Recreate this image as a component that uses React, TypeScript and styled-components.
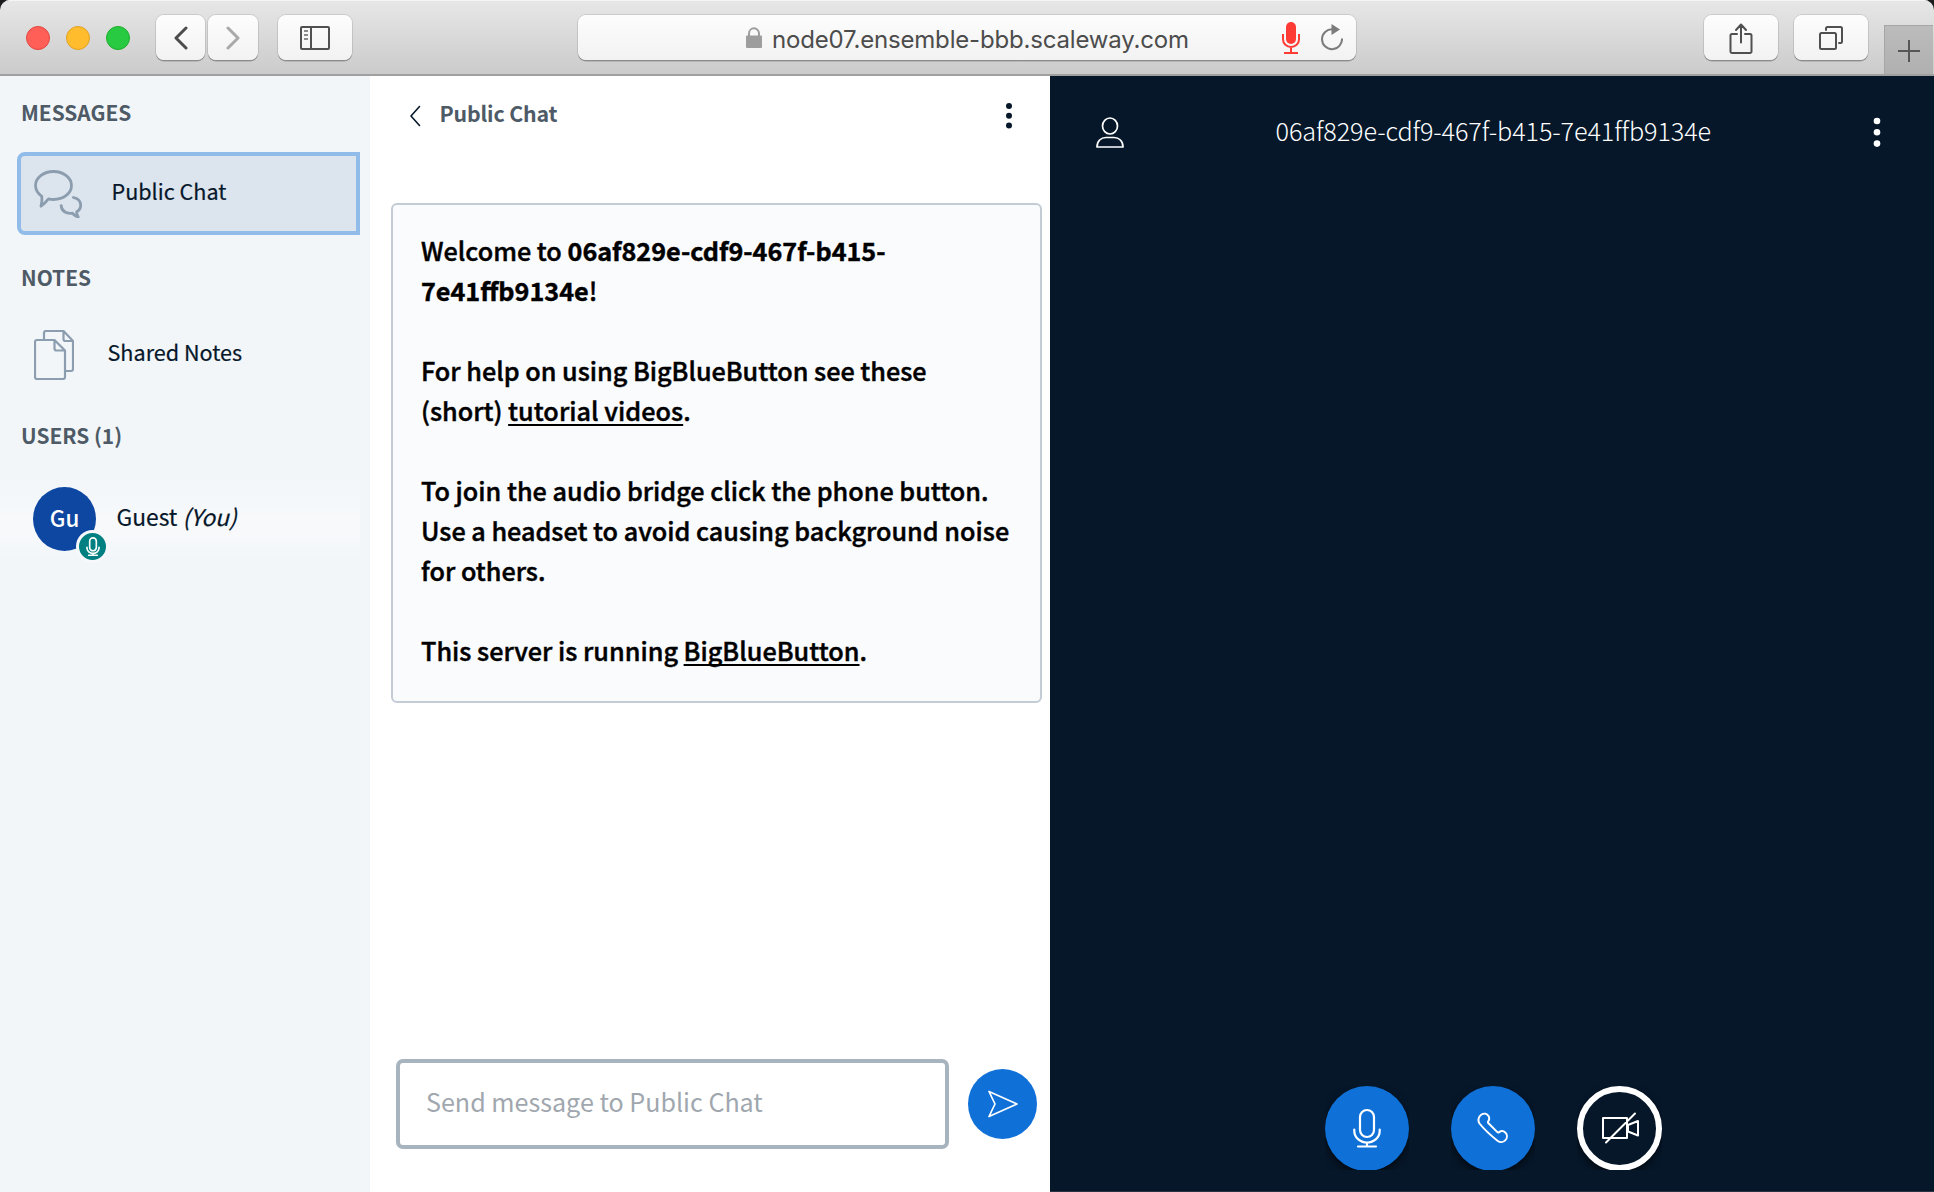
import React from "react";
import styled, { createGlobalStyle, css } from "styled-components";

const GlobalStyle = createGlobalStyle`
  * { box-sizing: border-box; }
  body { margin: 0; background: #1b1b1d; }
  button, input { font: inherit; margin: 0; padding: 0; border: 0; background: none; }
`;

const sourceSans = `"Source Sans Pro", "Noto Sans CJK SC", "Noto Sans", sans-serif`;

const Window = styled.div`
  width: 1934px;
  height: 1192px;
  display: flex;
  flex-direction: column;
  overflow: hidden;
  border-radius: 10px 10px 0 0;
  font-family: ${sourceSans};
  color: #06172a;
`;

/* ---------- browser toolbar ---------- */

const Toolbar = styled.header`
  height: 76px;
  flex: none;
  display: flex;
  align-items: flex-start;
  padding: 15px 0 0 26px;
  background: linear-gradient(#e7e7e7, #cbcbcb);
  border-bottom: 2px solid #a0a0a0;
  box-shadow: inset 0 1px 0 #f5f5f5;
`;

const Lights = styled.div`
  display: flex;
  gap: 16px;
  padding-top: 11px;
  margin-right: 26px;
`;

const Light = styled.span<{ $fill: string; $edge: string }>`
  width: 24px;
  height: 24px;
  border-radius: 50%;
  background: ${(p) => p.$fill};
  border: 1px solid ${(p) => p.$edge};
`;

const raised = css`
  height: 45px;
  border-radius: 8px;
  background: linear-gradient(#fdfdfd, #f2f2f2);
  box-shadow: 0 0 0 1px rgba(0, 0, 0, 0.1), 0 1.5px 0 rgba(0, 0, 0, 0.25);
  display: flex;
  align-items: center;
  justify-content: center;
`;

const ToolButton = styled.button<{ $w: number; $gap?: number }>`
  ${raised}
  width: ${(p) => p.$w}px;
  margin-right: ${(p) => p.$gap ?? 0}px;
`;

const AddressBar = styled.div`
  ${raised}
  width: 778px;
  margin-left: 226px;
  margin-right: 348px;
  justify-content: flex-start;
  padding-left: 168px;
`;

const Url = styled.span`
  width: 510px;
  margin-left: 10px;
  padding-top: 3px;
  font: 400 24px/45px Inter, Roboto, sans-serif;
  letter-spacing: -0.18px;
  color: #4c4c4c;
  white-space: nowrap;
`;

const NewTab = styled.button`
  width: 49px;
  height: 49px;
  margin-top: 10px;
  background: linear-gradient(#bcbcbc, #b0b0b0);
  box-shadow: inset 1px 1px 0 #a6a6a6;
  display: flex;
  align-items: center;
  justify-content: center;
  padding-top: 3px;
`;

/* ---------- page ---------- */

const Page = styled.main`
  flex: 1;
  display: flex;
  min-height: 0;
  background: #fff;
`;

const Sidebar = styled.aside`
  width: 370px;
  flex: none;
  padding: 24px 10px 0 17px;
  background: #f2f6f9;
  display: flex;
  flex-direction: column;
`;

const Heading = styled.h2`
  margin: 0 0 0 4px;
  font-size: 20.9px;
  line-height: 24px;
  font-weight: 600;
  color: #4e5a66;
`;

const Item = styled.div<{ $active?: boolean; $top: number; $bottom: number; $gap: number }>`
  height: 80px;
  margin: ${(p) => p.$top}px 0 ${(p) => p.$bottom}px;
  padding-left: 17px;
  display: flex;
  align-items: center;
  gap: ${(p) => p.$gap}px;
  font-size: 21.6px;
  line-height: 30px;
  ${(p) =>
    p.$active &&
    css`
      height: 83px;
      padding-left: 13px;
      background: #dce4ed;
      border: 4px solid #91bcea;
      border-radius: 8px 0 0 8px;
    `}
`;

const ItemLabel = styled.span`
  padding-bottom: 6px;
  white-space: pre;
  -webkit-text-stroke: 0.2px currentColor;
`;

const UserRow = styled(Item)`
  margin-left: -17px;
  padding-left: 33px;
  font-size: 22.8px;
  background: linear-gradient(#f2f6f9, #f7f9fb 50%, #f7f9fb 70%, #f2f6f9);
`;

const UserName = styled(ItemLabel)`
  padding-bottom: 4px;
`;

const Avatar = styled.div`
  position: relative;
  width: 63px;
  height: 64px;
  border-radius: 50%;
  background: #0d47a1;
  color: #fff;
  font-size: 22.4px;
  line-height: 61px;
  text-align: center;
  font-weight: 500;
`;

const MicBadge = styled.span`
  position: absolute;
  left: 43px;
  top: 43px;
  width: 33px;
  height: 33px;
  border-radius: 50%;
  border: 3px solid #f7f8fb;
  background: #008081;
  display: flex;
  align-items: center;
  justify-content: center;
`;

const Chat = styled.section`
  width: 680px;
  flex: none;
  display: flex;
  flex-direction: column;
  background: #fff;
`;

const ChatHeader = styled.div`
  height: 76px;
  display: flex;
  align-items: center;
  padding: 4px 37px 0 39px;
  margin-bottom: 51px;
`;

const ChatTitle = styled.h1`
  flex: 1;
  margin: -7px 0 0 18.5px;
  font-size: 21.3px;
  letter-spacing: -0.15px;
  line-height: 30px;
  font-weight: 600;
  color: #4e5a66;
`;

const Welcome = styled.article`
  width: 651px;
  height: 500px;
  margin-left: 21px;
  padding: 25px 20px 0 28px;
  border: 2px solid #c3ccd5;
  border-radius: 6px;
  background: #fafbfd;
  color: #000;
  font-size: 25.2px;
  line-height: 40px;
  font-weight: 500;
  -webkit-text-stroke: 0.45px #000;
`;

const Paragraph = styled.p`
  margin: 0 0 40px;
  white-space: nowrap;
`;

const Link = styled.a`
  color: inherit;
  letter-spacing: 0.04px;
  text-decoration: underline;
  text-decoration-thickness: 2px;
  text-underline-offset: 3px;
  text-decoration-skip-ink: none;
`;

const Composer = styled.form`
  margin-top: auto;
  padding: 0 13px 43px 26px;
  display: flex;
  align-items: center;
  justify-content: space-between;
`;

const MessageInput = styled.input`
  width: 553px;
  height: 90px;
  padding: 0 26px 6px;
  border: 4px solid #a7b3bd;
  border-radius: 7px;
  background: #fff;
  font-size: 25.1px;
  outline: none;
  &::placeholder { color: #a0a7ae; opacity: 1; }
`;

const SendButton = styled.button`
  width: 69px;
  height: 70px;
  border-radius: 50%;
  background: #0f70d7;
  display: flex;
  align-items: center;
  justify-content: center;
`;

const Media = styled.section`
  flex: 1;
  display: flex;
  flex-direction: column;
  justify-content: space-between;
  background: #06172a;
  border-bottom: 1px solid #2a3342;
`;

const MediaHeader = styled.div`
  display: flex;
  align-items: center;
  padding: 38px 53px 0 46px;
`;

const Room = styled.h1`
  flex: 1;
  margin: -4px 0 0 151.5px;
  font-size: 25.2px;
  letter-spacing: -0.1px;
  line-height: 40px;
  font-weight: 300;
  color: #fff;
`;

const Actions = styled.div`
  height: 84px;
  margin-bottom: 21px;
  padding-left: 3px;
  display: flex;
  justify-content: center;
  gap: 42px;
`;

const ActionSlot = styled.div<{ $w?: number }>`
  width: ${(p) => p.$w ?? 84}px;
  height: 84px;
  overflow: hidden;
`;

const ActionButton = styled.button<{ $outline?: boolean }>`
  width: 100%;
  height: 85px;
  border-radius: 50%;
  border: ${(p) => (p.$outline ? "6px solid #fff" : "0")};
  background: ${(p) => (p.$outline ? "#06172a" : "#0f70d7")};
  box-shadow: 0 4px 8px rgba(0, 0, 0, 0.6);
  display: flex;
  align-items: center;
  justify-content: center;
  padding-bottom: 2px;
`;

const Svg = ({ w, h, sw = 2, stroke = "#fff", children }: any) => (
  <svg width={w} height={h} viewBox={`0 0 ${w} ${h}`} fill="none" stroke={stroke}
    strokeWidth={sw} strokeLinecap="round" strokeLinejoin="round" style={{ flex: "none" }}>
    {children}
  </svg>
);

const Dots = ({ color, r, gap }: { color: string; r: number; gap: number }) => (
  <svg width="8" height={gap * 2 + 8} fill={color}>
    {[0, 1, 2].map((i) => <circle key={i} cx="4" cy={4 + i * gap} r={r} />)}
  </svg>
);

const Microphone = ({ w, h, sw }: { w: number; h: number; sw: number }) => (
  <svg width={w} height={h} viewBox="0 0 28 40" fill="none" stroke="#fff" strokeWidth={sw} strokeLinecap="round">
    <rect x="7" y="2" width="14" height="27" rx="7" />
    <path d="M1.3 21.500v1.500a12.700 11.500 0 0 0 25.400 0v-1.500M14 34.500v4M5 38.500h18" />
  </svg>
);

const chrome = "#505050";

export default function App() {
  return (
    <>
      <GlobalStyle />
      <Window>
        <Toolbar>
          <Lights>
            <Light $fill="#ff5f57" $edge="#e2463f" />
            <Light $fill="#ffbd2e" $edge="#dfa023" />
            <Light $fill="#28ca41" $edge="#1dad2b" />
          </Lights>
          <ToolButton $w={49} $gap={3}>
            <Svg w={14} h={24} sw={3} stroke="#4c4c4c"><path d="M12 2L2 12l10 10" /></Svg>
          </ToolButton>
          <ToolButton $w={50} $gap={20}>
            <Svg w={14} h={24} sw={3} stroke="#a9a9a9"><path d="M2 2l10 10L2 22" /></Svg>
          </ToolButton>
          <ToolButton $w={74}>
            <Svg w={30} h={24} stroke={chrome}>
              <rect x="1" y="1" width="28" height="22" rx="1" />
              <path d="M11 1v22" />
              <path d="M4 5h4M4 9h4M4 13h4" stroke="#8c8c8c" strokeLinecap="butt" strokeWidth="2" />
            </Svg>
          </ToolButton>
          <AddressBar>
            <svg width="16" height="21" fill="#9d9d9d">
              <rect x="0" y="8.500" width="16" height="12.500" rx="1" />
              <path d="M3 9V6.500a5 5.200 0 0 1 10 0V9" fill="none" stroke="#9d9d9d" strokeWidth="2" />
            </svg>
            <Url>node07.ensemble-bbb.scaleway.com</Url>
            <svg width="18" height="32" viewBox="0 0 18 32" fill="none" stroke="#ff3b36" strokeWidth="2">
              <rect x="4" y="0" width="10" height="22" rx="5" fill="#ff3b36" stroke="none" />
              <path d="M1 12v5.500a8 7.500 0 0 0 16 0V12M9 25.500V31M2 31h14" />
            </svg>
            <svg width="22" height="27" viewBox="0 0 22 27" fill="none" stroke="#7b7b7b" strokeWidth="2" style={{ marginLeft: 21 }}>
              <path d="M11.500 5.200A10 10 0 1 0 21 14.500" />
              <path d="M10.500 0L19 5.500l-8.500 5.500z" fill="#7b7b7b" stroke="none" />
            </svg>
          </AddressBar>
          <ToolButton $w={74} $gap={16}>
            <Svg w={24} h={32} stroke={chrome}>
              <path d="M8 12H3a1.500 1.500 0 0 0-1.500 1.500v16A1.500 1.500 0 0 0 3 31h18a1.500 1.500 0 0 0 1.500-1.500v-16A1.500 1.500 0 0 0 21 12h-5M12 20.500V3M7 8l5-5.500L17 8" />
            </Svg>
          </ToolButton>
          <ToolButton $w={74} $gap={16}>
            <Svg w={24} h={24} stroke={chrome}>
              <rect x="1" y="7" width="16" height="16" rx="1.500" />
              <path d="M7 4V2.500A1.500 1.500 0 0 1 8.500 1h13A1.500 1.500 0 0 1 23 2.500v13a1.500 1.500 0 0 1-1.500 1.500H20" />
            </Svg>
          </ToolButton>
          <NewTab>
            <Svg w={22} h={22} stroke="#565656"><path strokeLinecap="butt" d="M11 0v22M0 11h22" /></Svg>
          </NewTab>
        </Toolbar>

        <Page>
          <Sidebar>
            <Heading>MESSAGES</Heading>
            <Item $active $top={28} $bottom={30} $gap={29.5}>
              <Svg w={48} h={48} sw={2.8} stroke="#8b9dae">
                <path d="M19.500 1.500c10 0 18 6.200 18 14s-8 14-18 14c-2 0-3.500-.2-5-.6-2 2.500-4.500 5.200-7.500 7.300.8-3 1.200-6.700.8-9.900C4 23.500 1.500 19.800 1.500 15.500c0-7.800 8-14 18-14z" />
                <path d="M39.500 27.500c4.500 1 7.200 4.200 7.200 7.800 0 2.800-1.500 5-4 6.400-.2 2 .4 3.600 1.500 5.400-2.500-.6-4.300-2-5.800-4-6 1-11-2-11.200-7.500" />
              </Svg>
              <ItemLabel>Public Chat</ItemLabel>
            </Item>
            <Heading>NOTES</Heading>
            <Item $top={26} $bottom={28} $gap={33.5}>
              <Svg w={40} h={50} stroke="#8b9dae" sw={2.2}>
                <path d="M3 10h17.500L31 20.500V47a2 2 0 0 1-2 2H3a2 2 0 0 1-2-2V12a2 2 0 0 1 2-2zM20.500 10v8.500a2 2 0 0 0 2 2H31" />
                <path d="M10 9.500V3a2 2 0 0 1 2-2h17.500L39 11v28a2 2 0 0 1-2 2h-5M29.500 1v8a2 2 0 0 0 2 2H39" />
              </Svg>
              <ItemLabel>Shared Notes</ItemLabel>
            </Item>
            <Heading>USERS (1)</Heading>
            <UserRow $top={32} $bottom={0} $gap={20.5}>
              <Avatar>
                Gu
                <MicBadge><Microphone w={14} h={19} sw={3.5} /></MicBadge>
              </Avatar>
              <UserName>Guest <i>(You)</i></UserName>
            </UserRow>
          </Sidebar>

          <Chat>
            <ChatHeader>
              <Svg w={12} h={22} sw={1.6} stroke="#06172a"><path d="M10.500 1.500L2 11l8.500 9.500" /></Svg>
              <ChatTitle>Public Chat</ChatTitle>
              <Dots color="#06172a" r={3} gap={9.8} />
            </ChatHeader>
            <Welcome>
              <Paragraph>
                Welcome to <b>06af829e-cdf9-467f-b415-<br />7e41ffb9134e</b>!
              </Paragraph>
              <Paragraph>
                For help on using BigBlueButton see these<br />
                (short) <Link>tutorial videos</Link>.
              </Paragraph>
              <Paragraph>
                To join the audio bridge click the phone button.<br />
                Use a headset to avoid causing background noise<br />
                for others.
              </Paragraph>
              <Paragraph>
                This server is running <Link>BigBlueButton</Link>.
              </Paragraph>
            </Welcome>
            <Composer>
              <MessageInput placeholder="Send message to Public Chat" />
              <SendButton type="button">
                <Svg w={32} h={28} sw={1.7}><path d="M2 1.500L30 14 2 26.500 8 14z" /></Svg>
              </SendButton>
            </Composer>
          </Chat>

          <Media>
            <MediaHeader>
              <Svg w={28} h={32} sw={1.7}>
                <ellipse cx="14" cy="10" rx="7.500" ry="8" />
                <path d="M1 31c0-6 4-9.500 9-9.500h8c5 0 9 3.500 9 9.500z" />
              </Svg>
              <Room>06af829e-cdf9-467f-b415-7e41ffb9134e</Room>
              <Dots color="#fff" r={3.3} gap={11.3} />
            </MediaHeader>
            <Actions>
              <ActionSlot>
                <ActionButton><Microphone w={28} h={40} sw={2.2} /></ActionButton>
              </ActionSlot>
              <ActionSlot>
                <ActionButton>
                  <Svg w={32} h={32}>
                    <path d="M2.500 11.500C.5 8.500 1.500 4.500 4.500 2.500c2.500-1.500 5.500-.8 7 1.500 1 1.600.9 3.500-.2 5.200-.5.8-.4 1.500.2 2.100l8.600 8.600c.7.700 1.300.8 2.100.2 2-1.500 4.500-1.200 6.300.6 2 2.200 1.900 5.500-.3 7.700-2 2-5.200 2.200-7.400.6C17 26 6.500 16.500 2.500 11.500z" />
                  </Svg>
                </ActionButton>
              </ActionSlot>
              <ActionSlot $w={85}>
                <ActionButton $outline>
                  <Svg w={38} h={32}>
                    <path d="M2 6h24v20H2zM27 13l10-4v14.500l-10-4zM34 1.500L5 30.500" />
                  </Svg>
                </ActionButton>
              </ActionSlot>
            </Actions>
          </Media>
        </Page>
      </Window>
    </>
  );
}
